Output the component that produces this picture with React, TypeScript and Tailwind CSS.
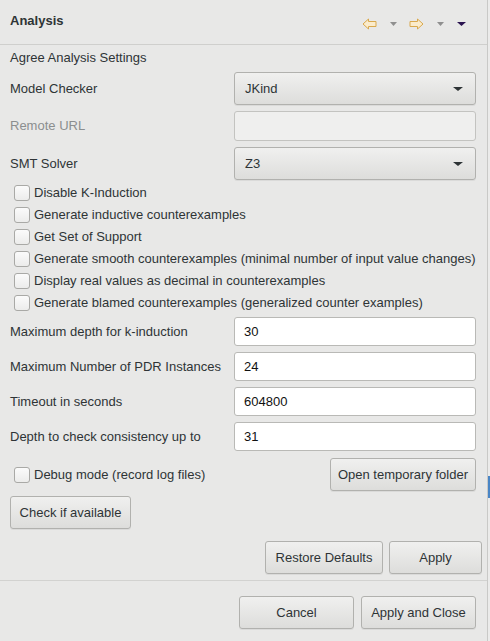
const font = { fontFamily: "'Liberation Sans', Arial, sans-serif" };

const btn =
  "rounded-[3px] border border-[#b1b1ae] bg-gradient-to-b from-[#f0f0ef] to-[#dddddb] text-[#2e3436] text-[13px] shadow-[0_1px_0_rgba(0,0,0,0.06)] flex items-center";

function ArrowLeft() {
  return (
    <svg width="15" height="12" viewBox="0 0 15 12">
      <path
        d="M1 6 L6.5 1 L6.5 3.5 L14 3.5 L14 8.5 L6.5 8.5 L6.5 11 Z"
        fill="#fbeccc"
        stroke="#d9a94e"
        strokeWidth="1"
        strokeLinejoin="round"
      />
    </svg>
  );
}

function ArrowRight() {
  return (
    <svg width="15" height="12" viewBox="0 0 15 12">
      <path
        d="M14 6 L8.5 1 L8.5 3.5 L1 3.5 L1 8.5 L8.5 8.5 L8.5 11 Z"
        fill="#fbeccc"
        stroke="#d9a94e"
        strokeWidth="1"
        strokeLinejoin="round"
      />
    </svg>
  );
}

function Tri({ color, w = 7 }: { color: string; w?: number }) {
  return (
    <svg width={w} height="4" viewBox={`0 0 ${w} 4`}>
      <path d={`M0 0 L${w} 0 L${w / 2} 4 Z`} fill={color} />
    </svg>
  );
}

function Combo({ value }: { value: string }) {
  return (
    <div className={`${btn} h-[33px] justify-between pl-[10px] pr-[12px]`}>
      <span>{value}</span>
      <Tri color="#2e3436" w={10} />
    </div>
  );
}

function Check({ label }: { label: string }) {
  return (
    <div className="flex items-center h-[22px] pl-[4px] gap-[4px]">
      <div className="w-[16px] h-[16px] rounded-[3px] border border-[#a9a9a6] bg-gradient-to-b from-[#fbfbfb] to-[#ececeb]" />
      <span>{label}</span>
    </div>
  );
}

function Field({ label, value }: { label: string; value: string }) {
  return (
    <div className="flex items-center">
      <span className="w-[224px]">{label}</span>
      <div className="flex-1 h-[29px] rounded-[3px] border border-[#b9b9b6] bg-white flex items-center px-[9px] text-[#111]">
        {value}
      </div>
    </div>
  );
}

export default function App() {
  return (
    <div
      style={font}
      className="w-[490px] h-[641px] bg-[#e8e8e7] text-[#2e3436] text-[13px] flex overflow-hidden"
    >
      <div className="w-[487px] flex flex-col">
        <div className="h-[45px] border-b border-[#cfcfcd] flex items-center justify-between pl-[10px] pr-[21px] pb-[3px]">
          <span className="font-bold text-[13px]">Analysis</span>
          <div className="flex items-center pt-[7px]">
            <ArrowLeft />
            <div className="ml-[13px]">
              <Tri color="#8f8f8f" />
            </div>
            <div className="ml-[12px]">
              <ArrowRight />
            </div>
            <div className="ml-[13px]">
              <Tri color="#8f8f8f" />
            </div>
            <div className="ml-[13px]">
              <Tri color="#2a1450" w={9} />
            </div>
          </div>
        </div>

        <div className="flex flex-col pl-[10px] pr-[11px]">
          <div className="h-[18px] mt-[4px] flex items-center">Agree Analysis Settings</div>

          <div className="flex items-center mt-[5px]">
            <span className="w-[224px]">Model Checker</span>
            <div className="flex-1">
              <Combo value="JKind" />
            </div>
          </div>

          <div className="flex items-center mt-[6px]">
            <span className="w-[224px] text-[#8b8e8f]">Remote URL</span>
            <div className="flex-1 h-[30px] rounded-[3px] border border-[#c3c3c0] bg-[#efefee]" />
          </div>

          <div className="flex items-center mt-[6px]">
            <span className="w-[224px]">SMT Solver</span>
            <div className="flex-1">
              <Combo value="Z3" />
            </div>
          </div>

          <div className="flex flex-col mt-[2px]">
            <Check label="Disable K-Induction" />
            <Check label="Generate inductive counterexamples" />
            <Check label="Get Set of Support" />
            <Check label="Generate smooth counterexamples (minimal number of input value changes)" />
            <Check label="Display real values as decimal in counterexamples" />
            <Check label="Generate blamed counterexamples (generalized counter examples)" />
          </div>

          <div className="flex flex-col gap-[6px] mt-[3px]">
            <Field label="Maximum depth for k-induction" value="30" />
            <Field label="Maximum Number of PDR Instances" value="24" />
            <Field label="Timeout in seconds" value="604800" />
            <Field label="Depth to check consistency up to" value="31" />
          </div>

          <div className="flex items-center justify-between mt-[7px]">
            <Check label="Debug mode (record log files)" />
            <div className={`${btn} justify-center h-[33px] w-[146px]`}>Open temporary folder</div>
          </div>

          <div className="flex mt-[5px]">
            <div className={`${btn} justify-center h-[33px] w-[121px]`}>Check if available</div>
          </div>

          <div className="flex justify-end gap-[6px] mt-[12px] -mr-[6px]">
            <div className={`${btn} justify-center h-[33px] w-[118px]`}>Restore Defaults</div>
            <div className={`${btn} justify-center h-[33px] w-[93px]`}>Apply</div>
          </div>
        </div>

        <div className="mt-[6px] border-t border-[#d2d2d0]" />

        <div className="flex justify-end gap-[7px] mt-[15px] pr-[11px]">
          <div className={`${btn} justify-center h-[33px] w-[115px]`}>Cancel</div>
          <div className={`${btn} justify-center h-[33px] w-[115px]`}>Apply and Close</div>
        </div>
      </div>

      <div className="flex-1 border-l border-[#c9c9c7] bg-[#ebebea] flex flex-col">
        <div className="mt-[476px] h-[22px] bg-[#4a86c6]" />
      </div>
    </div>
  );
}
